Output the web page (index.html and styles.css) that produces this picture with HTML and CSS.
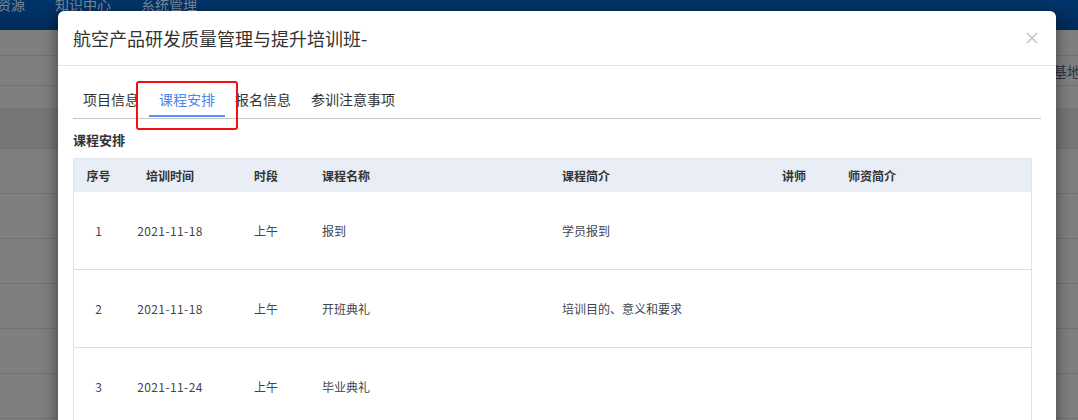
FILE: index.html
```html
<!DOCTYPE html>
<html lang="zh-CN">
<head>
  <meta charset="UTF-8">
  <title>课程安排</title>
  <link rel="stylesheet" href="styles.css">
</head>
<body>

  <!-- page behind the dialog (already dimmed) -->
  <div class="page">
    <div class="topnav">
      <span>资源</span>
      <span>知识中心</span>
      <span>系统管理</span>
    </div>
    <div class="bg-tools"></div>
    <div class="bg-filter"><span>实训基地名称</span></div>
    <div class="bg-gap"></div>
    <div class="bg-thead"></div>
    <div class="bg-row"></div>
    <div class="bg-row"></div>
    <div class="bg-row"></div>
    <div class="bg-row"></div>
    <div class="bg-row"></div>
    <div class="bg-row"></div>
  </div>

  <div class="modal">
    <div class="modal-header">
      <h4 class="modal-title">航空产品研发质量管理与提升培训班-</h4>
      <span class="close">
        <svg width="12" height="12" viewBox="0 0 12 12"><path d="M1 1L11 11M11 1L1 11" stroke="#c4c4c4" stroke-width="1.6"/></svg>
      </span>
    </div>

    <div class="modal-body">
      <ul class="tabs">
        <li>项目信息</li>
        <li class="active">课程安排</li>
        <li>报名信息</li>
        <li>参训注意事项</li>
      </ul>

      <div class="section-title">课程安排</div>

      <div class="course-table">
        <div class="tr thead">
          <div class="c">序号</div>
          <div class="c">培训时间</div>
          <div class="c">时段</div>
          <div>课程名称</div>
          <div>课程简介</div>
          <div>讲师</div>
          <div>师资简介</div>
        </div>
        <div class="tr">
          <div class="c">1</div>
          <div class="c num">2021-11-18</div>
          <div class="c">上午</div>
          <div>报到</div>
          <div>学员报到</div>
          <div></div>
          <div></div>
        </div>
        <div class="tr">
          <div class="c">2</div>
          <div class="c num">2021-11-18</div>
          <div class="c">上午</div>
          <div>开班典礼</div>
          <div>培训目的、意义和要求</div>
          <div></div>
          <div></div>
        </div>
        <div class="tr">
          <div class="c">3</div>
          <div class="c num">2021-11-24</div>
          <div class="c">上午</div>
          <div>毕业典礼</div>
          <div></div>
          <div></div>
          <div></div>
        </div>
      </div>
    </div>
  </div>

  <!-- annotation box around the active tab -->
  <div class="mark"></div>

</body>
</html>
```

FILE: styles.css
```css
body {
  margin: 0;
  width: 1078px;
  height: 420px;
  overflow: hidden;
  position: relative;
  font-family: "Noto Sans CJK SC", "Microsoft YaHei", sans-serif;
  background: #7f7f7f;
}

/* dimmed background page */
.page {
  width: 100%;
}
.topnav {
  height: 30px;
  background: linear-gradient(#00356a, #002b57);
  display: flex;
  gap: 30px;
  margin-left: -3px;
  overflow: hidden;
}
.topnav span {
  font-size: 14px;
  line-height: 14px;
  margin-top: -3px;
  color: #7d8796;
}
.bg-tools {
  height: 25px;
  border-bottom: 1px solid #717171;
}
.bg-filter {
  height: 29px;
  border-bottom: 1px solid #717171;
  display: flex;
  justify-content: flex-end;
  align-items: center;
  overflow: hidden;
}
.bg-filter span {
  font-size: 14px;
  color: #303540;
  white-space: nowrap;
  margin-right: -31px;
}
.bg-gap {
  height: 22px;
}
.bg-thead {
  height: 40px;
  background: #767676;
  border-bottom: 1px solid #707070;
}
.bg-row {
  height: 44px;
  border-bottom: 1px solid #717171;
}

/* dialog */
.modal {
  position: absolute;
  left: 58px;
  top: 11px;
  width: 998px;
  height: 430px;
  background: #fff;
  border-radius: 6px;
  box-shadow: 0 5px 15px rgba(0, 0, 0, 0.5);
}
.modal-header {
  padding: 15px;
  border-bottom: 1px solid #e5e5e5;
  display: flex;
  justify-content: space-between;
  align-items: center;
}
.modal-title {
  margin: 0;
  font-size: 18px;
  line-height: 24px;
  font-weight: normal;
  color: #333;
}
.close {
  display: flex;
  margin-right: 3px;
}

.modal-body {
  padding: 15px 15px 0;
}
.tabs {
  list-style: none;
  margin: 0;
  padding: 0 0 1px;
  display: flex;
  border-bottom: 1px solid #c6c6c6;
}
.tabs li {
  padding: 8px 10px 6px;
  font-size: 14px;
  line-height: 20px;
  color: #333;
  border-bottom: 2px solid transparent;
}
.tabs li.active {
  color: #4a86f0;
  border-bottom-color: #5b8ff9;
}

.section-title {
  margin-top: 11px;
  font-size: 13px;
  line-height: 20px;
  font-weight: bold;
  color: #333;
}

.course-table {
  margin-top: 8px;
  width: 957px;
  border-left: 1px solid #e3e3e3;
  border-right: 1px solid #e3e3e3;
}
.tr {
  display: grid;
  grid-template-columns: 49px 94px 98px 240px 220px 66px 1fr;
  height: 77px;
  border-bottom: 1px solid #dcdcdc;
  align-items: center;
  font-size: 12px;
  color: #404550;
}
.tr > div {
  padding-left: 7px;
}
.tr > .c {
  padding-left: 0;
  text-align: center;
}
.tr > .num {
  letter-spacing: 0.4px;
}
.tr.thead {
  height: 33px;
  border-top: 1px solid #e0e5ee;
  border-bottom: none;
  background: #e9edf5;
  font-weight: bold;
  color: #333;
}

.mark {
  position: absolute;
  left: 136px;
  top: 81px;
  width: 98px;
  height: 45px;
  border: 2px solid #f01010;
  border-radius: 3px;
}
```
